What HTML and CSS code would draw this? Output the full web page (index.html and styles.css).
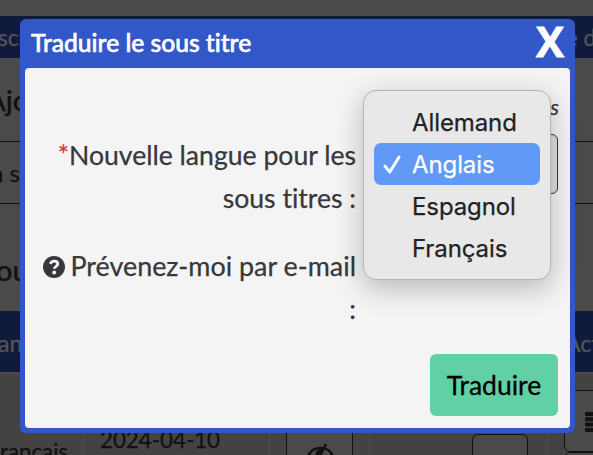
FILE: index.html
```html
<!DOCTYPE html>
<html lang="fr">
<head>
    <meta charset="UTF-8">
    <meta name="viewport" content="width=device-width, initial-scale=1.0">
    <title>Traduire le sous titre</title>
    <link rel="stylesheet" href="styles.css">
</head>
<body>
    <div class="page">
        <div class="nav">
            <span>scr</span>
            <span>e d</span>
        </div>
        <h1 class="title-add">Ajo</h1>
        <div class="field">n s</div>
        <h1 class="title-list">ou</h1>
        <div class="table-head">
            <span>an</span>
            <span>Act</span>
        </div>
        <div class="table-row">
            <div class="cell cell-lang">rançais</div>
            <div class="cell cell-date">2024-04-10</div>
            <div class="cell cell-eye">
                <div class="btn-eye">
                    <svg width="27" height="22" viewBox="0 0 27 22" fill="none" stroke="#111" stroke-width="2.4">
                        <path d="M2 11C7 3 20 3 25 11C20 19 7 19 2 11Z"/>
                        <path d="M14 6A5 5 0 0 0 9 13L12 16L17 5Z" fill="#111" stroke="none"/>
                        <path d="M19 1L9 21"/>
                    </svg>
                </div>
            </div>
            <div class="cell cell-file">
                <div class="btn-file">
                    <svg width="18" height="18" viewBox="0 0 18 18" fill="none" stroke="#111" stroke-width="3">
                        <circle cx="9" cy="9" r="7"/>
                    </svg>
                </div>
            </div>
            <div class="cell-actions">
                <div class="btn-menu">
                    <svg width="22" height="20" viewBox="0 0 22 20" fill="#111">
                        <rect width="22" height="4" rx="1"/>
                        <rect y="5.3" width="22" height="4" rx="1"/>
                        <rect y="10.6" width="22" height="4" rx="1"/>
                        <rect y="16" width="22" height="4" rx="1"/>
                    </svg>
                </div>
                <div class="btn-menu"></div>
            </div>
        </div>
    </div>

    <div class="modal">
        <div class="modal-header">
            <h2>Traduire le sous titre</h2>
            <span class="close">X</span>
        </div>
        <div class="modal-body">
            <div class="required">is</div>
            <div class="form-row">
                <label class="label-lang"><span class="star">*</span>Nouvelle langue pour les sous titres :</label>
                <div class="select"></div>
            </div>
            <div class="form-row">
                <label class="label-mail"><svg class="help" width="22" height="22" viewBox="0 0 22 22">
                        <circle cx="11" cy="11" r="11" fill="#37373c"/>
                        <path d="M7.2 7.8C8.1 5.9 9.4 5.1 11.2 5.1C13.4 5.1 14.8 6.4 14.8 8.1C14.8 10.3 11.3 10.5 11.3 12.8" fill="none" stroke="#f4f4f4" stroke-width="2.8"/>
                        <circle cx="11.2" cy="16.5" r="1.9" fill="#f4f4f4"/>
                    </svg>Prévenez-moi par e-mail :</label>
            </div>
            <div class="modal-footer">
                <button class="submit">Traduire</button>
            </div>
        </div>
    </div>

    <ul class="menu">
        <li>Allemand</li>
        <li class="selected">
            <svg class="check" width="20" height="20" viewBox="0 0 20 20" fill="none" stroke="#fff" stroke-width="3" stroke-linecap="round" stroke-linejoin="round">
                <path d="M3 12.2L7.8 18L17 3.2"/>
            </svg>Anglais
        </li>
        <li>Espagnol</li>
        <li>Français</li>
    </ul>
</body>
</html>
```

FILE: styles.css
```css
* {
    margin: 0;
    padding: 0;
    box-sizing: border-box;
}

body {
    width: 593px;
    height: 455px;
    overflow: hidden;
    background: #4a4a4a;
    color: #111;
    font-family: Lato, sans-serif;
    font-size: 24px;
    font-variant-ligatures: none;
    -webkit-text-stroke: 0.25px;
}

/* page behind the modal */
.page {
    height: 455px;
    padding-top: 16px;
    overflow: hidden;
}

.nav {
    display: flex;
    justify-content: space-between;
    height: 42px;
    line-height: 43px;
    background: #0f1a3d;
    color: #545454;
    font-size: 22.5px;
    white-space: nowrap;
    -webkit-text-stroke: 0.4px;
}

.nav span:first-child {
    margin-left: -2px;
}

.nav span:last-child {
    margin-right: -3px;
}

.title-add {
    height: 83px;
    margin-left: -14px;
    line-height: 84px;
    font-size: 29px;
    font-weight: 500;
}

.field {
    height: 63px;
    margin-left: -10px;
    border-top: 1px solid #111;
    border-bottom: 1px solid #111;
    line-height: 62px;
}

.title-list {
    height: 107px;
    margin-left: -13px;
    padding-left: 9px;
    line-height: 132px;
    font-size: 29px;
    font-weight: 500;
}

.table-head {
    display: flex;
    justify-content: space-between;
    height: 61px;
    line-height: 65px;
    background: #0f1a3d;
    color: #545454;
    font-size: 23px;
    -webkit-text-stroke: 0.4px;
}

.table-head span:first-child {
    margin-left: -2px;
}

.table-head span:last-child {
    width: 28px;
    white-space: nowrap;
}

.table-row {
    display: grid;
    grid-template-columns: 84px 186px 100px 178px 1fr;
    height: 83px;
    border-top: 2px solid #4a4a4a;
    background: #434343;
    font-size: 22.3px;
}

.cell {
    border-right: 1px solid #4e4e4e;
}

.cell-lang {
    padding-top: 64px;
}

.cell-date {
    padding: 52px 0 0 16px;
}

.cell-eye {
    padding: 40px 16px 0;
}

.btn-eye {
    height: 50px;
    padding: 28px 0 0 20px;
    border: 1px solid #111;
    background: #4a4a4a;
}

.cell-file {
    padding: 60px 0 0 102px;
}

.btn-file {
    width: 56px;
    height: 40px;
    padding: 17px 0 0 18px;
    border: 1px solid #111;
    border-radius: 6px;
    background: #4a4a4a;
}

.cell-actions {
    padding: 16px 0 0 16px;
}

.btn-menu {
    width: 70px;
    height: 62px;
    padding: 19px 0 0 20px;
    border: 1px solid #111;
    border-radius: 6px;
    background: #4a4a4a;
}

/* modal */
.modal {
    position: absolute;
    left: 20px;
    top: 19px;
    width: 555px;
    height: 414px;
    padding: 0 5px 5px;
    background: #3157c9;
    border-radius: 6px;
}

.modal-header {
    display: flex;
    justify-content: space-between;
    height: 49px;
    padding: 0 6px;
    color: #fff;
}

.modal-header h2 {
    font-size: 24.6px;
    font-weight: 500;
    line-height: 48px;
    -webkit-text-stroke: 0.6px;
}

.close {
    font-family: "Open Sans", sans-serif;
    font-size: 42px;
    font-weight: 700;
    line-height: 44px;
    -webkit-text-stroke: 0.8px;
}

.modal-body {
    height: 360px;
    padding: 24px 12px 12px 11px;
    background: #f4f4f4;
    border-radius: 4px;
    color: #37373c;
    font-size: 26.6px;
}

.required {
    height: 32px;
    line-height: 30px;
    margin-right: -1px;
    text-align: right;
    font-size: 22px;
    font-style: italic;
}

.form-row {
    display: flex;
    line-height: 43px;
}

.form-row label {
    width: 320px;
    text-align: right;
}

.label-lang {
    padding: 10px 0 24px;
}

.label-mail {
    font-size: 26.9px;
}

.select {
    width: 190px;
    height: 60px;
    margin-top: 10px;
    margin-left: 12px;
    border: 1px solid #37373c;
    border-radius: 6px;
    background: #e0e0e0;
}

.star {
    color: #d33831;
}

.help {
    margin-right: 5px;
    vertical-align: -2px;
}

.modal-footer {
    display: flex;
    justify-content: flex-end;
    padding-top: 24px;
}

.submit {
    width: 128px;
    height: 62px;
    border: none;
    border-radius: 6px;
    background: #62d0a5;
    color: #000;
    font-family: Lato, sans-serif;
    font-size: 26.5px;
    -webkit-text-stroke: 0.3px;
}

/* open select menu */
.menu {
    position: absolute;
    left: 363px;
    top: 90px;
    width: 188px;
    height: 190px;
    padding: 10px;
    list-style: none;
    background: #e8e8e8;
    border: 1px solid #b4b4b4;
    border-radius: 13px;
    box-shadow: 0 8px 28px rgba(0, 0, 0, 0.25);
    color: #222;
    font-family: Inter, sans-serif;
    font-size: 24px;
}

.menu li {
    display: flex;
    align-items: center;
    height: 42px;
    padding-left: 38px;
    letter-spacing: -0.1px;
}

.menu .selected {
    padding-left: 8px;
    background: #6199f7;
    border-radius: 7px;
    color: #fff;
}

.check {
    margin-right: 10px;
}
```
